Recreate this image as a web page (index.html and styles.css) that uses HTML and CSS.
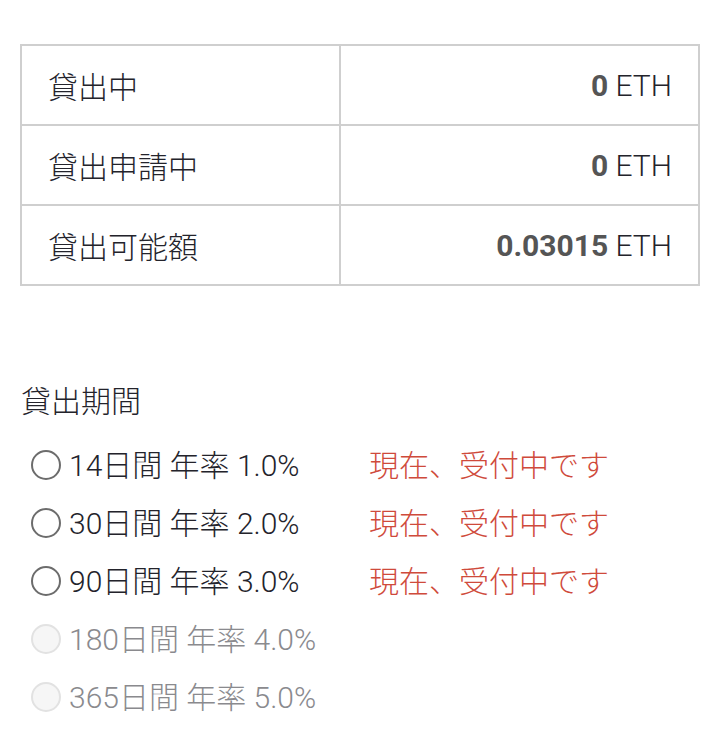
FILE: index.html
```html
<!DOCTYPE html>
<html lang="ja">
<head>
<meta charset="utf-8">
<link rel="stylesheet" href="styles.css">
</head>
<body>
<div class="page">
  <table class="summary">
    <tr><td class="label">貸出中</td><td class="value"><b>0</b> ETH</td></tr>
    <tr><td class="label">貸出申請中</td><td class="value"><b>0</b> ETH</td></tr>
    <tr><td class="label">貸出可能額</td><td class="value"><b>0.03015</b> ETH</td></tr>
  </table>

  <div class="section-title">貸出期間</div>

  <ul class="periods">
    <li class="period"><span class="radio"></span><span class="plabel">14日間 年率 1.0%</span><span class="status">現在、受付中です</span></li>
    <li class="period"><span class="radio"></span><span class="plabel">30日間 年率 2.0%</span><span class="status">現在、受付中です</span></li>
    <li class="period"><span class="radio"></span><span class="plabel">90日間 年率 3.0%</span><span class="status">現在、受付中です</span></li>
    <li class="period disabled"><span class="radio"></span><span class="plabel">180日間 年率 4.0%</span></li>
    <li class="period disabled"><span class="radio"></span><span class="plabel">365日間 年率 5.0%</span></li>
  </ul>
</div>
</body>
</html>
```

FILE: styles.css
```css
* { box-sizing: border-box; }
html, body { margin: 0; padding: 0; background: #fff; }
body {
  font-family: Roboto, "Noto Sans CJK JP", sans-serif;
  color: #23232b;
  font-size: 30px;
  font-weight: 300;
}
.page { padding: 44px 20px 0 20px; }
.summary {
  width: 680px;
  border-collapse: collapse;
  border: 2px solid #cfcfcf;
}
.summary td {
  border: 2px solid #cfcfcf;
  height: 80px;
  padding: 0 26px;
  vertical-align: middle;
}
.summary td.label { width: 319px; }
.summary td.value { text-align: right; }
.summary td.value b { color: #555; font-weight: 700; }
.section-title {
  margin-top: 96px;
  line-height: 40px;
  padding-left: 1px;
}
.periods {
  list-style: none;
  margin: 12px 0 0 0;
  padding: 0 0 0 11px;
}
.period {
  display: flex;
  align-items: center;
  height: 58px;
}
.radio {
  width: 30px;
  height: 30px;
  border-radius: 50%;
  border: 2px solid #6c6c6c;
  margin-top: 4px;
  flex: none;
}
.plabel {
  margin-left: 8px;
  width: 300px;
  flex: none;
}
.status { color: #cf4a3b; }
.disabled .plabel { color: #8a8a8e; }
.disabled .radio { border-color: #e2e2e2; background: #f6f6f6; }
```
